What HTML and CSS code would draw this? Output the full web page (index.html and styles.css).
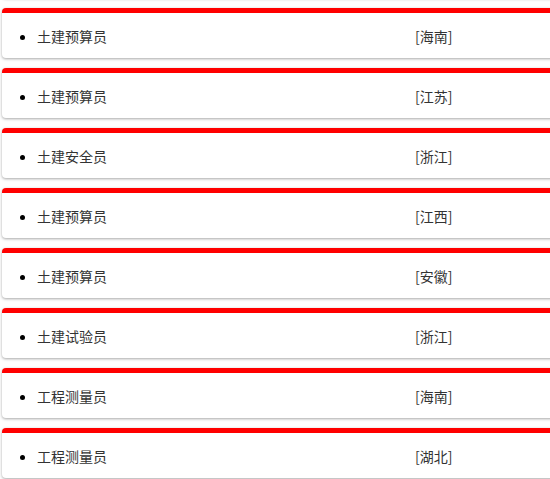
FILE: index.html
```html
<!DOCTYPE html>
<html lang="zh">
<head>
<meta charset="utf-8">
<link rel="stylesheet" href="styles.css">
</head>
<body>
<div class="list">
  <div class="card prev"></div>
  <div class="card"><ul><li><span class="name">土建预算员</span><span class="area">[海南]</span></li></ul></div>
  <div class="card"><ul><li><span class="name">土建预算员</span><span class="area">[江苏]</span></li></ul></div>
  <div class="card"><ul><li><span class="name">土建安全员</span><span class="area">[浙江]</span></li></ul></div>
  <div class="card"><ul><li><span class="name">土建预算员</span><span class="area">[江西]</span></li></ul></div>
  <div class="card"><ul><li><span class="name">土建预算员</span><span class="area">[安徽]</span></li></ul></div>
  <div class="card"><ul><li><span class="name">土建试验员</span><span class="area">[浙江]</span></li></ul></div>
  <div class="card"><ul><li><span class="name">工程测量员</span><span class="area">[海南]</span></li></ul></div>
  <div class="card"><ul><li><span class="name">工程测量员</span><span class="area">[湖北]</span></li></ul></div>
</div>
</body>
</html>
```
FILE: styles.css
```css
html, body {
  margin: 0;
  padding: 0;
  overflow: hidden;
  background: #fff;
}
.list {
  margin-top: -52px;
  padding-left: 2px;
  width: 556px;
  font-family: "Noto Sans CJK SC", "Microsoft YaHei", sans-serif;
  font-size: 14px;
  color: #333;
}
.card {
  border-top: 5px solid #f00;
  border-radius: 4px;
  background: #fff;
  box-shadow: 0 1px 3px rgba(0,0,0,0.35);
  height: 45px;
  margin-bottom: 10px;
  box-sizing: content-box;
}
.card ul {
  margin: 0;
  padding: 13px 0 0 35px;
  list-style: disc outside;
}
.card li {
  line-height: 20px;
  color: #333;
}
.card li::marker {
  color: #000;
}
.name {
  display: inline-block;
  width: 378px;
}
```
